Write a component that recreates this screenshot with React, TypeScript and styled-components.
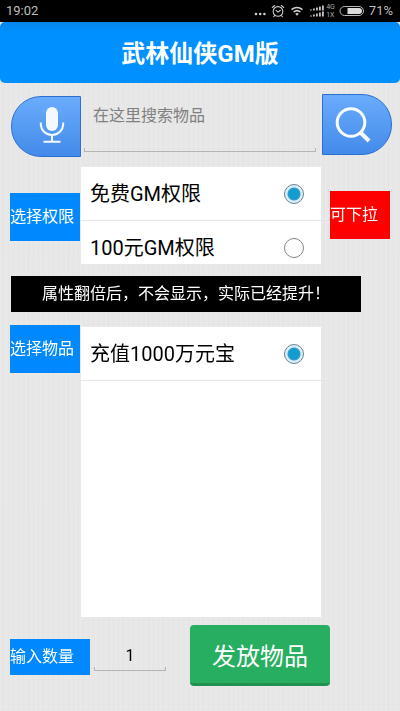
import React, { useState } from "react";
import styled, { createGlobalStyle } from "styled-components";

const GlobalStyle = createGlobalStyle`
  *, *::before, *::after { box-sizing: border-box; }
  body { margin: 0; background: #e8e8e8; }
  body, button, input {
    font-family: Roboto, "Noto Sans CJK SC", sans-serif;
  }
`;

const Screen = styled.div`
  display: flex;
  flex-direction: column;
  min-height: 100vh;
  background-color: #e7e7e7;
  background-image:
    repeating-linear-gradient(90deg, rgba(255, 255, 255, 0.1) 0 1px, transparent 1px 3px, rgba(0, 0, 0, 0.006) 3px 5px),
    repeating-linear-gradient(0deg, rgba(255, 255, 255, 0.08) 0 1px, transparent 1px 4px);
`;

const StatusBar = styled.div`
  display: flex;
  align-items: center;
  justify-content: space-between;
  height: 22px;
  padding: 0 7px 0 6px;
  background: #000;
  color: #bdbdbd;
  font-size: 13px;
  line-height: 22px;
`;

const StatusIcons = styled.div`
  display: flex;
  align-items: center;
  gap: 4px;
`;

const Header = styled.header`
  background: #d9e9f8;
`;

const Title = styled.h1`
  margin: 0;
  padding: 14px 16px 11px;
  border-radius: 5px;
  background: linear-gradient(#0787ea, #0090ff 10px);
  color: #fff;
  font-size: 24px;
  font-weight: 700;
  line-height: 36px;
  text-align: center;
`;

const SearchRow = styled.form`
  display: flex;
  align-items: flex-start;
  padding: 11px 8px 0 11px;
`;

const RoundButton = styled.button<{ $side: "left" | "right" }>`
  display: flex;
  align-items: center;
  justify-content: center;
  flex: none;
  width: 70px;
  height: 61px;
  margin: ${(p) => (p.$side === "left" ? "2px 3px 0 0" : "0 0 0 6px")};
  padding: ${(p) => (p.$side === "left" ? "0 0 4px 12px" : "0 8px 0 0")};
  border: 1px solid #2b6fd0;
  border-radius: ${(p) => (p.$side === "left" ? "30px 0 0 30px" : "0 30px 30px 0")};
  background: linear-gradient(#6aacfc, #438aea);
  cursor: pointer;
`;

const FieldFrame = styled.div<{ $fill?: boolean }>`
  display: flex;
  flex-direction: column;
  flex: ${(p) => (p.$fill ? "1 1 0" : "0 0 72px")};
  min-width: 0;

  &::after {
    content: "";
    height: 4px;
    border: 1px solid #b4b4b4;
    border-top: 0;
  }
`;

const SearchInput = styled.input`
  width: 100%;
  height: 54px;
  padding: 0 9px 12px;
  border: 0;
  outline: 0;
  background: transparent;
  color: #222;
  font-size: 16px;
  &::placeholder { color: #808080; opacity: 1; }
`;

const CountInput = styled.input`
  width: 100%;
  height: 27px;
  padding: 4px 0 0;
  border: 0;
  outline: 0;
  background: transparent;
  color: #000;
  font-size: 16px;
  text-align: center;
`;

const Section = styled.section<{ $grow?: boolean }>`
  display: grid;
  grid-template-columns: 70px minmax(0, 1fr) 60px;
  column-gap: 1px;
  flex: ${(p) => (p.$grow ? "1 0 auto" : "none")};
  margin-top: ${(p) => (p.$grow ? "13px" : "10px")};
  padding: 0 10px;
`;

const Tag = styled.div<{ $offset?: number }>`
  align-self: start;
  height: 48px;
  margin-top: ${(p) => p.$offset ?? 0}px;
  background: #0089ff;
  color: #fff;
  font-size: 16px;
  line-height: 48px;
  white-space: nowrap;
`;

const RedTag = styled(Tag)`
  background: #f00;
`;

const OptionList = styled.div<{ $scroll?: boolean }>`
  height: ${(p) => (p.$scroll ? "97px" : "auto")};
  min-height: 97px;
  margin: ${(p) => (p.$scroll ? "0 8px 0 0" : "2px 8px 0 0")};
  background: #fff;
  overflow-y: ${(p) => (p.$scroll ? "auto" : "visible")};
  scrollbar-width: none;
`;

const Option = styled.label`
  display: flex;
  align-items: center;
  justify-content: space-between;
  height: 54px;
  padding: 1px 17px 0 9px;
  border-bottom: 1px solid #e6e6e6;
  color: #000;
  font-size: 20px;
  line-height: 30px;
  white-space: nowrap;
  cursor: pointer;
`;

const Radio = styled.input`
  appearance: none;
  flex: none;
  width: 20px;
  height: 20px;
  margin: 0;
  border: 1px solid #858585;
  border-radius: 50%;
  background: #fff;

  &:checked {
    border-color: #6d8490;
    background: radial-gradient(circle, #149bd0 0 5px, #3a9fc4 6px, #d8effa 7px);
  }
`;

const Notice = styled.p`
  margin: 12px 39px 0 11px;
  background: #000;
  color: #fff;
  font-size: 16px;
  line-height: 36px;
  text-align: center;
  white-space: nowrap;
`;

const Footer = styled.form`
  display: flex;
  align-items: center;
  padding: 8px 10px 25px;
`;

const CountLabel = styled.label`
  flex: none;
  width: 80px;
  margin: 3px 4px 0 0;
  background: #0089ff;
  color: #fff;
  font-size: 16px;
  line-height: 36px;
  white-space: nowrap;
`;

const SendButton = styled.button`
  flex: none;
  width: 140px;
  height: 61px;
  margin-left: 24px;
  padding: 0;
  border: 0;
  border-bottom: 3px solid #219150;
  border-radius: 4px;
  background: #27ae60;
  color: #fff;
  font-size: 24px;
  cursor: pointer;
`;

const MoreIcon = () => (
  <svg width="13" height="12" viewBox="0 0 13 12" fill="#d0d0d0">
    <circle cx="2" cy="9" r="1.3" />
    <circle cx="6.2" cy="9" r="1.3" />
    <circle cx="10.4" cy="9" r="1.3" />
  </svg>
);

const AlarmIcon = () => (
  <svg width="14" height="14" viewBox="0 0 14 14" fill="none" stroke="#c8c8c8" strokeWidth="1.1" strokeLinecap="round">
    <circle cx="7" cy="7.4" r="4.8" />
    <path d="M1.3 3.5 3.7 1.5M12.7 3.5 10.3 1.5M5 6.3l2 1.8 2.4-1.8M3.7 11.5l-1 1.2M10.3 11.5l1 1.2" />
  </svg>
);

const WifiIcon = () => (
  <svg width="16" height="12" viewBox="0 0 14 12" fill="none" stroke="#d4d4d4" strokeWidth="1.5">
    <path d="M1.5 4.6Q7 .2 12.5 4.6M3.6 7Q7 4.2 10.4 7" />
    <path d="M5.2 8.8Q7 7.2 8.8 8.8L7 10.8Z" fill="#d4d4d4" stroke="none" />
  </svg>
);

const SignalIcon = () => (
  <svg width="16" height="14" viewBox="0 0 16 14" fill="#c4c4c4">
    {[0, 6].map((y) =>
      [1, 2, 3, 4, 5].map((h, i) => <rect key={`${y}-${i}`} x={1 + i * 3} y={y + 6.5 - h} width="1.8" height={h} />)
    )}
  </svg>
);

const BatteryIcon = () => (
  <svg width="26" height="12" viewBox="0 0 26 12">
    <rect x="1" y="1.5" width="23.5" height="9" rx="4.5" fill="none" stroke="#b8b8b8" />
    <path d="M8.5 3H20a3 3 0 0 1 0 6H8.5Z" fill="#dcdcdc" />
  </svg>
);

const NetworkType = styled.span`
  display: flex;
  flex-direction: column;
  margin-left: -3px;
  color: #a8a8a8;
  font-size: 7px;
  line-height: 8px;
`;

const MicIcon = () => (
  <svg width="28" height="40" viewBox="0 0 28 40" fill="none" stroke="#f4f8ff">
    <rect x="8" y="2" width="12" height="24" rx="6" fill="#f4f8ff" stroke="none" />
    <path d="M2.8 17.5V19a11.2 11 0 0 0 22.4 0v-1.5M14 30v6M5.5 36.8h17" strokeWidth="2" />
  </svg>
);

const SearchIcon = () => (
  <svg width="38" height="38" viewBox="0 0 38 38" fill="none" stroke="#f8fbff">
    <circle cx="17" cy="16.5" r="13.8" strokeWidth="3" />
    <path d="M26.5 26.5 35 35" strokeWidth="4" />
  </svg>
);

export default function App() {
  const [right, setRight] = useState("免费GM权限");
  const rights = ["免费GM权限", "100元GM权限"];
  const [count, setCount] = useState("1");
  const stop = (e: React.FormEvent) => e.preventDefault();

  return (
    <Screen>
      <GlobalStyle />
      <StatusBar>
        <span>19:02</span>
        <StatusIcons>
          <MoreIcon />
          <AlarmIcon />
          <WifiIcon />
          <SignalIcon />
          <NetworkType><span>4G</span><span>1X</span></NetworkType>
          <BatteryIcon />
          <span>71%</span>
        </StatusIcons>
      </StatusBar>
      <Header>
        <Title>武林仙侠GM版</Title>
      </Header>

      <SearchRow onSubmit={stop}>
        <RoundButton type="button" $side="left" aria-label="语音"><MicIcon /></RoundButton>
        <FieldFrame $fill>
          <SearchInput aria-label="在这里搜索物品" placeholder="在这里搜索物品" />
        </FieldFrame>
        <RoundButton type="submit" $side="right" aria-label="搜索"><SearchIcon /></RoundButton>
      </SearchRow>

      <Section>
        <Tag $offset={26}>选择权限</Tag>
        <OptionList $scroll role="radiogroup" aria-label="选择权限">
          {rights.map((name) => (
            <Option key={name}>
              {name}
              <Radio type="radio" name="right" checked={right === name} onChange={() => setRight(name)} />
            </Option>
          ))}
        </OptionList>
        <RedTag $offset={24}>可下拉</RedTag>
      </Section>

      <Notice>属性翻倍后，不会显示，实际已经提升！</Notice>

      <Section $grow>
        <Tag>选择物品</Tag>
        <OptionList role="radiogroup" aria-label="选择物品">
          <Option>
            充值1000万元宝
            <Radio type="radio" name="item" defaultChecked />
          </Option>
        </OptionList>
      </Section>

      <Footer onSubmit={stop}>
        <CountLabel htmlFor="count">输入数量</CountLabel>
        <FieldFrame>
          <CountInput id="count" inputMode="numeric" value={count} onChange={(e) => setCount(e.target.value)} />
        </FieldFrame>
        <SendButton type="submit">发放物品</SendButton>
      </Footer>
    </Screen>
  );
}
